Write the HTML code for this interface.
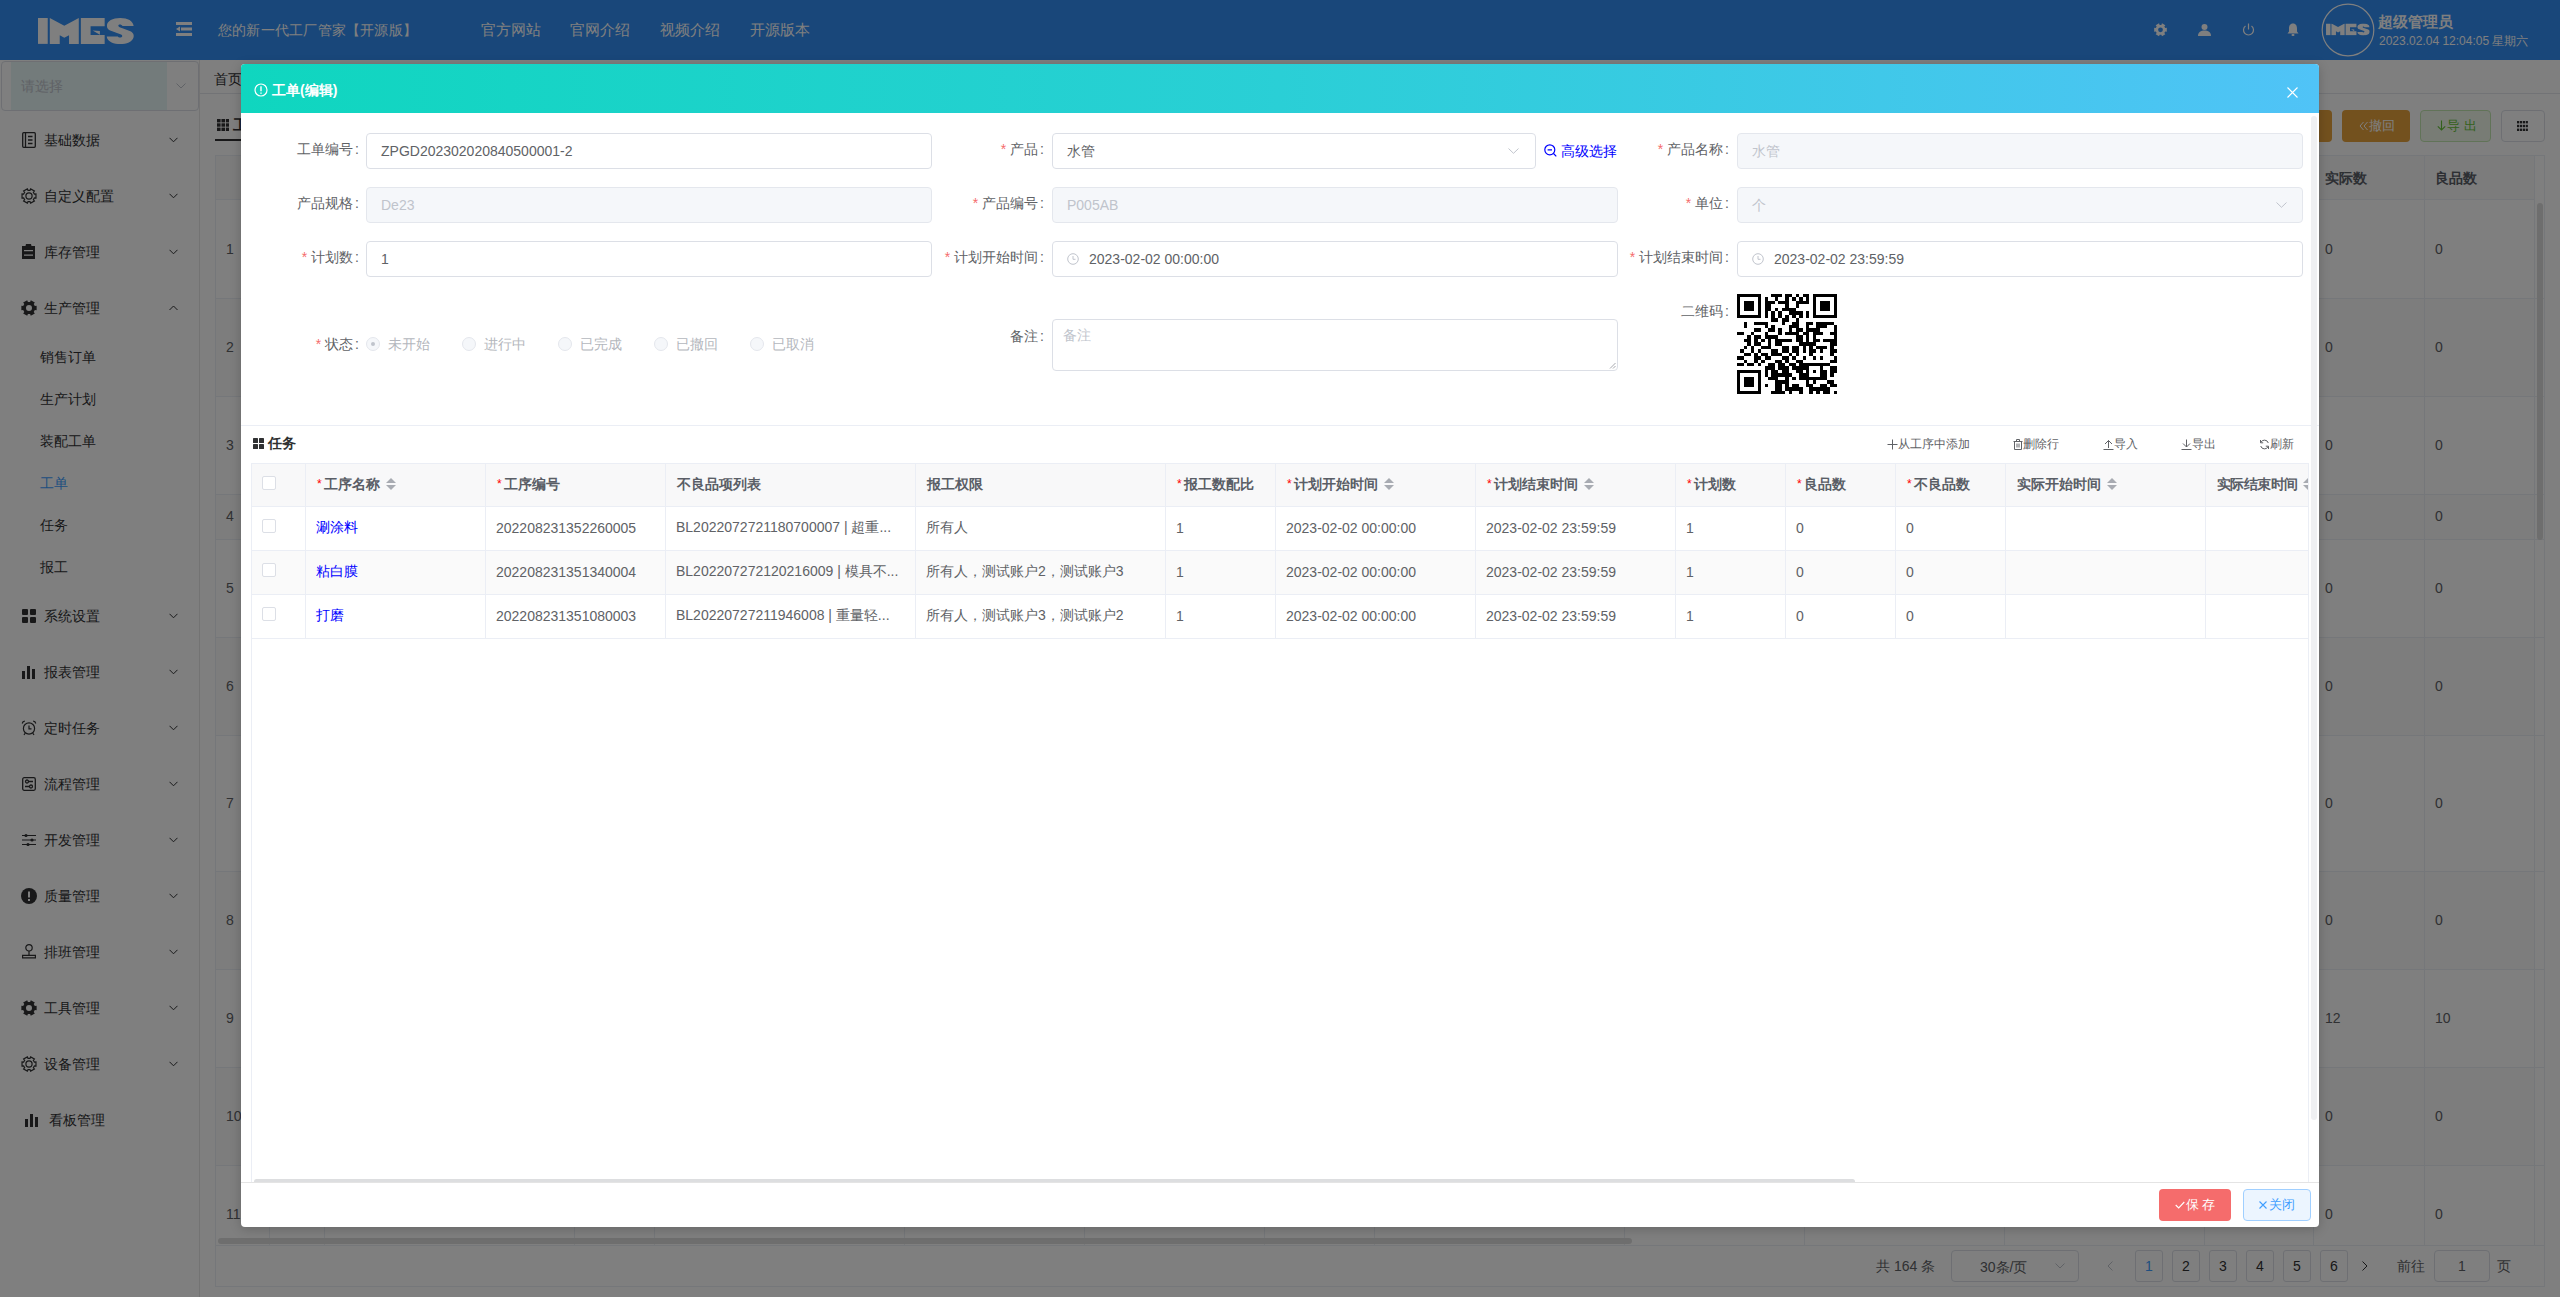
<!DOCTYPE html><html><head><meta charset="utf-8"><title>IMES</title><style>
*{box-sizing:border-box;margin:0;padding:0}
html,body{width:2560px;height:1297px;overflow:hidden;background:#fff;font-family:"Liberation Sans",sans-serif;font-size:14px;color:#606266}
.abs{position:absolute}
.hdr{position:absolute;left:0;top:0;width:2560px;height:60px;background:#328ef4;color:#fff}
.side{position:absolute;left:0;top:60px;width:200px;height:1237px;background:#fff;border-right:1px solid #e6e6e6}
.mi{position:absolute;left:0;width:199px;height:56px;line-height:56px;color:#303133;font-size:14px}
.mi .ic{position:absolute;left:22px;top:21px;width:14px;height:14px}
.mi .tx{position:absolute;left:44px;top:0}
.mi .ch{position:absolute;left:169px;top:25px;width:9px;height:6px}
.smi{position:absolute;left:40px;height:42px;line-height:42px;color:#303133;font-size:14px}
.overlay{position:absolute;left:0;top:0;width:2560px;height:1297px;background:rgba(0,0,0,.5)}
.modal{position:absolute;left:241px;top:64px;width:2078px;height:1163px;background:#fff;border-radius:4px;overflow:hidden;box-shadow:0 2px 12px rgba(0,0,0,.2)}
.mh{position:absolute;left:0;top:0;width:2078px;height:49px;background:linear-gradient(90deg,#0fd6bf 0%,#2acfd6 50%,#50c3f7 100%)}
.lbl{position:absolute;height:36px;line-height:36px;text-align:right;color:#606266;font-size:14px;white-space:nowrap}
.req{color:#f56c6c;margin-right:4px}
.inp{position:absolute;height:36px;border:1px solid #dcdfe6;border-radius:4px;background:#fff;line-height:34px;padding-left:14px;color:#606266;font-size:14px;white-space:nowrap}
.inp.dis{background:#f5f7fa;border-color:#e4e7ed;color:#c0c4cc}
.radio{position:absolute;top:337px;width:14px;height:14px;border:1px solid #e4e7ed;border-radius:50%;background:#f5f7fa}
.rtx{position:absolute;top:335px;line-height:18px;color:#b4b7bd;font-size:14px}
table.t{border-collapse:collapse;table-layout:fixed;position:absolute}
.t td,.t th{border:1px solid #ebeef5;text-align:left;white-space:nowrap;overflow:hidden;text-overflow:ellipsis;font-size:14px}
.t th{text-overflow:clip;background:#f8f8f9;color:#5a5e66;font-weight:bold;height:43px;padding-left:11px}
.t td{height:44px;padding-left:10px;padding-bottom:2px;color:#606266}
.star{color:#f00;margin-right:2px;font-weight:normal;font-size:12px;position:relative;top:-1px}
.cb{display:inline-block;width:14px;height:14px;border:1px solid #dcdfe6;border-radius:2px;background:#fff;vertical-align:middle;position:relative;top:-3px}
.lnk{color:#0000ff}
.sort{display:inline-block;width:10px;height:14px;vertical-align:middle;margin-left:6px;position:relative;top:-1px}
.sort:before{content:"";position:absolute;left:0;top:1px;border:5px solid transparent;border-top:0;border-bottom:5px solid #a8abb2}
.sort:after{content:"";position:absolute;left:0;top:8px;border:5px solid transparent;border-bottom:0;border-top:5px solid #a8abb2}
.bt{position:absolute;font-size:12px;color:#606266;white-space:nowrap}
.bg td,.bg th{border:1px solid #ebeef5;color:#606266;font-size:14px;padding-left:10px;text-align:left}
.pg{position:absolute;top:1250px;width:28px;height:32px;border:1px solid #dcdfe6;border-radius:3px;text-align:center;line-height:30px;color:#303133;font-size:14px;background:#fff}
</style></head><body>
<div class="hdr">
<svg class="abs" style="left:38.14px;top:18px" width="95.65" height="26.1" viewBox="100 145 2310 630"><g fill="#fff"><path d="M100 145H335V770H100Z"/>
<path d="M385 145L735 330L1085 145V770H850V560L735 620L625 560V770H385Z"/>
<path d="M1135 145H1710V345H1370V555H1710V770H1135Z"/>
<path d="M1420 445L1595 460V550Z"/>
<path d="M2410 340H2140C2120 300 2050 290 2040 330C2035 365 2090 375 2140 392L2300 450C2390 480 2412 530 2412 580C2412 700 2270 775 2085 775C1900 775 1770 700 1760 590H2030C2040 625 2125 625 2135 585C2140 550 2090 540 2040 522L1860 455C1790 425 1765 390 1765 330C1765 215 1905 145 2085 145C2270 145 2395 215 2410 340Z"/></g></svg>
<svg class="abs" style="left:176px;top:22px" width="16" height="14" viewBox="0 0 16 14"><g fill="#fff"><rect x="0" y="0" width="16" height="3"/><rect x="5" y="5.5" width="11" height="3"/><rect x="0" y="11" width="16" height="3"/><path d="M0 7 L4 4.5 L4 9.5 Z"/></g></svg>
<div class="abs" style="left:218px;top:21px;font-size:14px;line-height:18px;color:#fff;white-space:nowrap;letter-spacing:0.22px">您的新一代工厂管家【开源版】</div>
<div class="abs" style="left:481px;top:21px;font-size:14.5px;line-height:18px;color:#fff;white-space:nowrap">官方网站</div>
<div class="abs" style="left:570px;top:21px;font-size:14.5px;line-height:18px;color:#fff;white-space:nowrap">官网介绍</div>
<div class="abs" style="left:660px;top:21px;font-size:14.5px;line-height:18px;color:#fff;white-space:nowrap">视频介绍</div>
<div class="abs" style="left:750px;top:21px;font-size:14.5px;line-height:18px;color:#fff;white-space:nowrap">开源版本</div>
<svg class="abs" style="left:2153px;top:23px" width="15" height="14" viewBox="0 0 15 14"><path fill="#fff" fill-rule="evenodd" d="M12.21 5.11 L13.81 4.85 L13.81 8.75 L12.21 8.49 L11.32 10.03 L12.34 11.29 L8.96 13.24 L8.39 11.72 L6.61 11.72 L6.04 13.24 L2.66 11.29 L3.68 10.03 L2.79 8.49 L1.19 8.75 L1.19 4.85 L2.79 5.11 L3.68 3.57 L2.66 2.31 L6.04 0.36 L6.61 1.88 L8.39 1.88 L8.96 0.36 L12.34 2.31 L11.32 3.57 Z M9.90 6.80 A2.4 2.4 0 1 0 5.10 6.80 A2.4 2.4 0 1 0 9.90 6.80 Z"/></svg>
<svg class="abs" style="left:2198px;top:24px" width="13" height="12" viewBox="0 0 13 12"><g fill="#fff"><circle cx="6.5" cy="3" r="3"/><path d="M0 12 C0 8 3 6.5 6.5 6.5 C10 6.5 13 8 13 12 Z"/></g></svg>
<svg class="abs" style="left:2242px;top:23px" width="13" height="13" viewBox="0 0 13 13"><g fill="none" stroke="#fff" stroke-width="1.2"><path d="M3.5 3 A5 5 0 1 0 9.5 3"/><path d="M6.5 0.5 V6.5"/></g></svg>
<svg class="abs" style="left:2287px;top:23px" width="12" height="13" viewBox="0 0 12 13"><g fill="#fff"><path d="M6 0.5 C3 0.5 2 3 2 5.5 L2 8.5 L0.5 10.5 L11.5 10.5 L10 8.5 L10 5.5 C10 3 9 0.5 6 0.5 Z"/><rect x="4.5" y="11" width="3" height="2" rx="1"/></g></svg>
<svg class="abs" style="left:2321px;top:3px" width="54" height="54" viewBox="0 0 54 54"><circle cx="27" cy="27" r="25.8" fill="none" stroke="#fff" stroke-width="1.2"/>
<svg x="5" y="20.5" width="43.7" height="11.9" viewBox="100 145 2310 630"><g fill="#fff"><path d="M100 145H335V770H100Z"/>
<path d="M385 145L735 330L1085 145V770H850V560L735 620L625 560V770H385Z"/>
<path d="M1135 145H1710V345H1370V555H1710V770H1135Z"/>
<path d="M1420 445L1595 460V550Z"/>
<path d="M2410 340H2140C2120 300 2050 290 2040 330C2035 365 2090 375 2140 392L2300 450C2390 480 2412 530 2412 580C2412 700 2270 775 2085 775C1900 775 1770 700 1760 590H2030C2040 625 2125 625 2135 585C2140 550 2090 540 2040 522L1860 455C1790 425 1765 390 1765 330C1765 215 1905 145 2085 145C2270 145 2395 215 2410 340Z"/></g></svg></svg>
<div class="abs" style="left:2378px;top:13px;font-size:15px;line-height:18px;font-weight:bold;color:#fff;white-space:nowrap">超级管理员</div>
<div class="abs" style="left:2379px;top:34px;font-size:12px;line-height:15px;color:#fff;white-space:nowrap">2023.02.04 12:04:05 星期六</div>
</div>
<div class="side">
<div class="abs" style="left:1px;top:1px;width:198px;height:50px;border:1px solid #dcdfe6;border-radius:4px;background:#fff"></div>
<div class="abs" style="left:11px;top:2px;width:156px;height:48px;background:#e6f6f6"></div>
<div class="abs" style="left:21px;top:17px;font-size:14px;line-height:18px;color:#c0c4cc">请选择</div>
<svg class="abs" style="left:176px;top:23px" width="10" height="6" viewBox="0 0 10 6"><path d="M0.5 0.5 L5 5 L9.5 0.5" fill="none" stroke="#c0c4cc" stroke-width="1"/></svg>
<div class="mi" style="top:52px"><svg class="ic" viewBox="0 0 14 16" style="height:16px;top:20px"><g fill="none" stroke="#303133" stroke-width="1.3"><rect x="0.7" y="0.7" width="12.6" height="14.6" rx="1"/><path d="M3.5 1 V15 M6 4.5 H10.5 M6 8 H10.5 M6 11.5 H10.5"/></g></svg><span class="tx">基础数据</span><svg class="ch" viewBox="0 0 9 6"><path d="M0.5 0.8 L4.5 4.8 L8.5 0.8" fill="none" stroke="#303133" stroke-width="1"/></svg></div>
<div class="mi" style="top:108px"><svg class="ic" viewBox="0 0 16 16" style="width:16px;height:16px;left:21px;top:20px"><path fill="none" stroke="#303133" stroke-width="1.2" d="M13.36 6.07 L14.97 5.84 L14.97 10.16 L13.36 9.93 L12.35 11.68 L13.36 12.96 L9.62 15.12 L9.01 13.61 L6.99 13.61 L6.38 15.12 L2.64 12.96 L3.65 11.68 L2.64 9.93 L1.03 10.16 L1.03 5.84 L2.64 6.07 L3.65 4.32 L2.64 3.04 L6.38 0.88 L6.99 2.39 L9.01 2.39 L9.62 0.88 L13.36 3.04 L12.35 4.32 Z"/><circle cx="8" cy="8" r="3.1" fill="none" stroke="#303133" stroke-width="1.2"/></svg><span class="tx">自定义配置</span><svg class="ch" viewBox="0 0 9 6"><path d="M0.5 0.8 L4.5 4.8 L8.5 0.8" fill="none" stroke="#303133" stroke-width="1"/></svg></div>
<div class="mi" style="top:164px"><svg class="ic" viewBox="0 0 13 15" style="width:13px;height:15px;top:20px"><path fill="#303133" fill-rule="evenodd" d="M0 2 H3.5 L4 0 H9 L9.5 2 H13 V15 H0 Z M2 6 H11 V7.2 H2 Z M2 10.5 H11 V11.7 H2 Z"/></svg><span class="tx">库存管理</span><svg class="ch" viewBox="0 0 9 6"><path d="M0.5 0.8 L4.5 4.8 L8.5 0.8" fill="none" stroke="#303133" stroke-width="1"/></svg></div>
<div class="mi" style="top:220px"><svg class="ic" viewBox="0 0 16 16" style="width:16px;height:16px;left:21px;top:20px"><path fill="#303133" fill-rule="evenodd" d="M13.83 5.90 L15.64 5.64 L15.64 10.36 L13.83 10.10 L12.73 12.00 L13.87 13.44 L9.77 15.80 L9.10 14.10 L6.90 14.10 L6.23 15.80 L2.13 13.44 L3.27 12.00 L2.17 10.10 L0.36 10.36 L0.36 5.64 L2.17 5.90 L3.27 4.00 L2.13 2.56 L6.23 0.20 L6.90 1.90 L9.10 1.90 L9.77 0.20 L13.87 2.56 L12.73 4.00 Z M11.00 8.00 A3.0 3.0 0 1 0 5.00 8.00 A3.0 3.0 0 1 0 11.00 8.00 Z"/></svg><span class="tx">生产管理</span><svg class="ch" viewBox="0 0 9 6"><path d="M0.5 5 L4.5 1 L8.5 5" fill="none" stroke="#303133" stroke-width="1"/></svg></div>
<div class="smi" style="top:276px;color:#303133">销售订单</div>
<div class="smi" style="top:318px;color:#303133">生产计划</div>
<div class="smi" style="top:360px;color:#303133">装配工单</div>
<div class="smi" style="top:402px;color:#409eff">工单</div>
<div class="smi" style="top:444px;color:#303133">任务</div>
<div class="smi" style="top:486px;color:#303133">报工</div>
<div class="mi" style="top:528px"><svg class="ic" viewBox="0 0 14 14" style="top:21px"><g fill="#303133"><rect x="0" y="0" width="6" height="6" rx="1"/><rect x="8" y="0" width="6" height="6" rx="1"/><rect x="0" y="8" width="6" height="6" rx="1"/><rect x="8" y="8" width="6" height="6" rx="1"/></g></svg><span class="tx">系统设置</span><svg class="ch" viewBox="0 0 9 6"><path d="M0.5 0.8 L4.5 4.8 L8.5 0.8" fill="none" stroke="#303133" stroke-width="1"/></svg></div>
<div class="mi" style="top:584px"><svg class="ic" viewBox="0 0 14 14" style="top:21px"><g fill="#303133"><rect x="0" y="6" width="3" height="8"/><rect x="5" y="1" width="3" height="13"/><rect x="10" y="4" width="3" height="10"/></g></svg><span class="tx">报表管理</span><svg class="ch" viewBox="0 0 9 6"><path d="M0.5 0.8 L4.5 4.8 L8.5 0.8" fill="none" stroke="#303133" stroke-width="1"/></svg></div>
<div class="mi" style="top:640px"><svg class="ic" viewBox="0 0 16 16" style="width:16px;height:16px;left:21px;top:20px"><g fill="none" stroke="#303133" stroke-width="1.2"><circle cx="8" cy="8.5" r="5.6"/><path d="M8 5.5 V8.8 H10.5 M1.2 3.5 A3 3 0 0 1 3.8 1.2 M14.8 3.5 A3 3 0 0 0 12.2 1.2 M4.3 13 L3 15 M11.7 13 L13 15"/></g></svg><span class="tx">定时任务</span><svg class="ch" viewBox="0 0 9 6"><path d="M0.5 0.8 L4.5 4.8 L8.5 0.8" fill="none" stroke="#303133" stroke-width="1"/></svg></div>
<div class="mi" style="top:696px"><svg class="ic" viewBox="0 0 14 14" style="top:21px"><g fill="none" stroke="#303133" stroke-width="1.3"><rect x="0.7" y="0.7" width="12.6" height="12.6" rx="1.5"/><circle cx="5" cy="4.5" r="1.5"/><circle cx="9" cy="9.5" r="1.5"/><path d="M6.5 4.5 H11 M3 9.5 H7.5"/></g></svg><span class="tx">流程管理</span><svg class="ch" viewBox="0 0 9 6"><path d="M0.5 0.8 L4.5 4.8 L8.5 0.8" fill="none" stroke="#303133" stroke-width="1"/></svg></div>
<div class="mi" style="top:752px"><svg class="ic" viewBox="0 0 14 14" style="top:21px"><g fill="none" stroke="#303133" stroke-width="1.2"><path d="M0 2.5 H14 M0 7 H14 M0 11.5 H14"/></g><g fill="#303133"><circle cx="4" cy="2.5" r="1.6"/><circle cx="10" cy="7" r="1.6"/><circle cx="6" cy="11.5" r="1.6"/></g></svg><span class="tx">开发管理</span><svg class="ch" viewBox="0 0 9 6"><path d="M0.5 0.8 L4.5 4.8 L8.5 0.8" fill="none" stroke="#303133" stroke-width="1"/></svg></div>
<div class="mi" style="top:808px"><svg class="ic" viewBox="0 0 16 16" style="width:16px;height:16px;left:21px;top:20px"><circle cx="8" cy="8" r="8" fill="#303133"/><rect x="7" y="3.5" width="2" height="6" fill="#fff"/><rect x="7" y="11" width="2" height="2" fill="#fff"/></svg><span class="tx">质量管理</span><svg class="ch" viewBox="0 0 9 6"><path d="M0.5 0.8 L4.5 4.8 L8.5 0.8" fill="none" stroke="#303133" stroke-width="1"/></svg></div>
<div class="mi" style="top:864px"><svg class="ic" viewBox="0 0 14 15" style="height:15px;top:20px"><g fill="none" stroke="#303133" stroke-width="1.2"><circle cx="7" cy="3.8" r="3.2"/><path d="M7 7 V11.3 M0.6 11.3 H13.4 V13.8 H0.6 Z"/></g></svg><span class="tx">排班管理</span><svg class="ch" viewBox="0 0 9 6"><path d="M0.5 0.8 L4.5 4.8 L8.5 0.8" fill="none" stroke="#303133" stroke-width="1"/></svg></div>
<div class="mi" style="top:920px"><svg class="ic" viewBox="0 0 16 16" style="width:16px;height:16px;left:21px;top:20px"><path fill="#303133" fill-rule="evenodd" d="M13.83 5.90 L15.64 5.64 L15.64 10.36 L13.83 10.10 L12.73 12.00 L13.87 13.44 L9.77 15.80 L9.10 14.10 L6.90 14.10 L6.23 15.80 L2.13 13.44 L3.27 12.00 L2.17 10.10 L0.36 10.36 L0.36 5.64 L2.17 5.90 L3.27 4.00 L2.13 2.56 L6.23 0.20 L6.90 1.90 L9.10 1.90 L9.77 0.20 L13.87 2.56 L12.73 4.00 Z M11.00 8.00 A3.0 3.0 0 1 0 5.00 8.00 A3.0 3.0 0 1 0 11.00 8.00 Z"/></svg><span class="tx">工具管理</span><svg class="ch" viewBox="0 0 9 6"><path d="M0.5 0.8 L4.5 4.8 L8.5 0.8" fill="none" stroke="#303133" stroke-width="1"/></svg></div>
<div class="mi" style="top:976px"><svg class="ic" viewBox="0 0 16 16" style="width:16px;height:16px;left:21px;top:20px"><path fill="none" stroke="#303133" stroke-width="1.2" d="M13.36 6.07 L14.97 5.84 L14.97 10.16 L13.36 9.93 L12.35 11.68 L13.36 12.96 L9.62 15.12 L9.01 13.61 L6.99 13.61 L6.38 15.12 L2.64 12.96 L3.65 11.68 L2.64 9.93 L1.03 10.16 L1.03 5.84 L2.64 6.07 L3.65 4.32 L2.64 3.04 L6.38 0.88 L6.99 2.39 L9.01 2.39 L9.62 0.88 L13.36 3.04 L12.35 4.32 Z"/><circle cx="8" cy="8" r="3.1" fill="none" stroke="#303133" stroke-width="1.2"/></svg><span class="tx">设备管理</span><svg class="ch" viewBox="0 0 9 6"><path d="M0.5 0.8 L4.5 4.8 L8.5 0.8" fill="none" stroke="#303133" stroke-width="1"/></svg></div>
<div class="mi" style="top:1032px"><svg class="ic" viewBox="0 0 14 14" style="top:21px;left:25px"><g fill="#303133"><rect x="0" y="6" width="3" height="8"/><rect x="5" y="1" width="3" height="13"/><rect x="10" y="4" width="3" height="10"/></g></svg><span class="tx" style="left:49px">看板管理</span></div>
</div>
<div class="abs" style="left:200px;top:60px;width:2360px;height:34px;background:#fff;border-bottom:1px solid #e4e7ed"></div>
<div class="abs" style="left:214px;top:70px;font-size:14px;line-height:18px;color:#303133">首页</div>
<svg class="abs" style="left:216.5px;top:119px" width="12.5" height="12" viewBox="0 0 12.5 12"><g fill="#303133"><rect x="0" y="0" width="3.6" height="3.4"/><rect x="4.45" y="0" width="3.6" height="3.4"/><rect x="8.9" y="0" width="3.6" height="3.4"/><rect x="0" y="4.3" width="3.6" height="3.4"/><rect x="4.45" y="4.3" width="3.6" height="3.4"/><rect x="8.9" y="4.3" width="3.6" height="3.4"/><rect x="0" y="8.6" width="3.6" height="3.4"/><rect x="4.45" y="8.6" width="3.6" height="3.4"/><rect x="8.9" y="8.6" width="3.6" height="3.4"/></g></svg>
<div class="abs" style="left:233px;top:116px;font-size:15px;line-height:18px;color:#303133;font-weight:bold">工单</div>
<div class="abs" style="left:215px;top:139px;width:60px;height:2px;background:#303133"></div>
<div class="abs" style="left:2270px;top:110px;width:62px;height:32px;background:#e6a23c;border-radius:4px"></div>
<div class="abs" style="left:2342px;top:110px;width:68px;height:32px;background:#e6a23c;border-radius:4px"></div>
<svg class="abs" style="left:2359px;top:121px" width="10" height="10" viewBox="0 0 10 10"><path d="M4.5 1 L1 5 L4.5 9 M8.5 1 L5 5 L8.5 9" fill="none" stroke="#fff" stroke-width="1"/></svg>
<div class="abs" style="left:2369px;top:117px;font-size:13px;line-height:17px;color:#fff;white-space:nowrap">撤回</div>
<div class="abs" style="left:2420px;top:110px;width:71px;height:32px;background:#f0f9eb;border:1px solid #c2e7b0;border-radius:4px"></div>
<svg class="abs" style="left:2437px;top:120px" width="9" height="11" viewBox="0 0 9 11"><path d="M4.5 0.5 V10 M0.8 6.3 L4.5 10 L8.2 6.3" fill="none" stroke="#67c23a" stroke-width="1.1"/></svg>
<div class="abs" style="left:2447px;top:117px;font-size:13px;line-height:17px;color:#67c23a;white-space:nowrap;letter-spacing:0px">导 出</div>
<div class="abs" style="left:2501px;top:110px;width:44px;height:32px;background:#fff;border:1px solid #dcdfe6;border-radius:4px"></div>
<svg class="abs" style="left:2517px;top:121px" width="11" height="10" viewBox="0 0 11 10"><g fill="#303133"><rect x="0" y="0" width="2.2" height="2.4"/><rect x="2.9" y="0" width="2.2" height="2.4"/><rect x="5.8" y="0" width="2.2" height="2.4"/><rect x="8.7" y="0" width="2.2" height="2.4"/><rect x="0" y="3.8" width="2.2" height="2.4"/><rect x="2.9" y="3.8" width="2.2" height="2.4"/><rect x="5.8" y="3.8" width="2.2" height="2.4"/><rect x="8.7" y="3.8" width="2.2" height="2.4"/><rect x="0" y="7.6" width="2.2" height="2.4"/><rect x="2.9" y="7.6" width="2.2" height="2.4"/><rect x="5.8" y="7.6" width="2.2" height="2.4"/><rect x="8.7" y="7.6" width="2.2" height="2.4"/></g></svg>
<div class="abs" style="left:215px;top:155px;width:2330px;height:1132px;border:1px solid #ebeef5;background:#fff"></div>
<div class="abs" style="left:216px;top:156px;width:2318px;height:44px;background:#f8f8f9;border-bottom:1px solid #ebeef5"></div>
<div class="abs" style="left:2325px;top:169px;font-size:14px;line-height:18px;color:#5a5e66;font-weight:bold">实际数</div>
<div class="abs" style="left:2435px;top:169px;font-size:14px;line-height:18px;color:#5a5e66;font-weight:bold">良品数</div>
<div class="abs" style="left:216px;top:298px;width:2328px;height:1px;background:#ebeef5"></div>
<div class="abs" style="left:226px;top:240px;font-size:14px;line-height:18px;color:#606266">1</div>
<div class="abs" style="left:2325px;top:240px;font-size:14px;line-height:18px;color:#606266">0</div>
<div class="abs" style="left:2435px;top:240px;font-size:14px;line-height:18px;color:#606266">0</div>
<div class="abs" style="left:216px;top:299px;width:2318px;height:97px;background:#fafafa"></div>
<div class="abs" style="left:216px;top:396px;width:2328px;height:1px;background:#ebeef5"></div>
<div class="abs" style="left:226px;top:338px;font-size:14px;line-height:18px;color:#606266">2</div>
<div class="abs" style="left:2325px;top:338px;font-size:14px;line-height:18px;color:#606266">0</div>
<div class="abs" style="left:2435px;top:338px;font-size:14px;line-height:18px;color:#606266">0</div>
<div class="abs" style="left:216px;top:494px;width:2328px;height:1px;background:#ebeef5"></div>
<div class="abs" style="left:226px;top:436px;font-size:14px;line-height:18px;color:#606266">3</div>
<div class="abs" style="left:2325px;top:436px;font-size:14px;line-height:18px;color:#606266">0</div>
<div class="abs" style="left:2435px;top:436px;font-size:14px;line-height:18px;color:#606266">0</div>
<div class="abs" style="left:216px;top:495px;width:2318px;height:44px;background:#fafafa"></div>
<div class="abs" style="left:216px;top:539px;width:2328px;height:1px;background:#ebeef5"></div>
<div class="abs" style="left:226px;top:507px;font-size:14px;line-height:18px;color:#606266">4</div>
<div class="abs" style="left:2325px;top:507px;font-size:14px;line-height:18px;color:#606266">0</div>
<div class="abs" style="left:2435px;top:507px;font-size:14px;line-height:18px;color:#606266">0</div>
<div class="abs" style="left:216px;top:637px;width:2328px;height:1px;background:#ebeef5"></div>
<div class="abs" style="left:226px;top:579px;font-size:14px;line-height:18px;color:#606266">5</div>
<div class="abs" style="left:2325px;top:579px;font-size:14px;line-height:18px;color:#606266">0</div>
<div class="abs" style="left:2435px;top:579px;font-size:14px;line-height:18px;color:#606266">0</div>
<div class="abs" style="left:216px;top:638px;width:2318px;height:97px;background:#fafafa"></div>
<div class="abs" style="left:216px;top:735px;width:2328px;height:1px;background:#ebeef5"></div>
<div class="abs" style="left:226px;top:677px;font-size:14px;line-height:18px;color:#606266">6</div>
<div class="abs" style="left:2325px;top:677px;font-size:14px;line-height:18px;color:#606266">0</div>
<div class="abs" style="left:2435px;top:677px;font-size:14px;line-height:18px;color:#606266">0</div>
<div class="abs" style="left:216px;top:871px;width:2328px;height:1px;background:#ebeef5"></div>
<div class="abs" style="left:226px;top:794px;font-size:14px;line-height:18px;color:#606266">7</div>
<div class="abs" style="left:2325px;top:794px;font-size:14px;line-height:18px;color:#606266">0</div>
<div class="abs" style="left:2435px;top:794px;font-size:14px;line-height:18px;color:#606266">0</div>
<div class="abs" style="left:216px;top:872px;width:2318px;height:97px;background:#fafafa"></div>
<div class="abs" style="left:216px;top:969px;width:2328px;height:1px;background:#ebeef5"></div>
<div class="abs" style="left:226px;top:911px;font-size:14px;line-height:18px;color:#606266">8</div>
<div class="abs" style="left:2325px;top:911px;font-size:14px;line-height:18px;color:#606266">0</div>
<div class="abs" style="left:2435px;top:911px;font-size:14px;line-height:18px;color:#606266">0</div>
<div class="abs" style="left:216px;top:1067px;width:2328px;height:1px;background:#ebeef5"></div>
<div class="abs" style="left:226px;top:1009px;font-size:14px;line-height:18px;color:#606266">9</div>
<div class="abs" style="left:2325px;top:1009px;font-size:14px;line-height:18px;color:#606266">12</div>
<div class="abs" style="left:2435px;top:1009px;font-size:14px;line-height:18px;color:#606266">10</div>
<div class="abs" style="left:216px;top:1068px;width:2318px;height:97px;background:#fafafa"></div>
<div class="abs" style="left:216px;top:1165px;width:2328px;height:1px;background:#ebeef5"></div>
<div class="abs" style="left:226px;top:1107px;font-size:14px;line-height:18px;color:#606266">10</div>
<div class="abs" style="left:2325px;top:1107px;font-size:14px;line-height:18px;color:#606266">0</div>
<div class="abs" style="left:2435px;top:1107px;font-size:14px;line-height:18px;color:#606266">0</div>
<div class="abs" style="left:216px;top:1245px;width:2328px;height:1px;background:#ebeef5"></div>
<div class="abs" style="left:226px;top:1205px;font-size:14px;line-height:18px;color:#606266">11</div>
<div class="abs" style="left:2325px;top:1205px;font-size:14px;line-height:18px;color:#606266">0</div>
<div class="abs" style="left:2435px;top:1205px;font-size:14px;line-height:18px;color:#606266">0</div>
<div class="abs" style="left:269px;top:156px;width:1px;height:1089px;background:#ebeef5"></div>
<div class="abs" style="left:324px;top:156px;width:1px;height:1089px;background:#ebeef5"></div>
<div class="abs" style="left:574px;top:156px;width:1px;height:1089px;background:#ebeef5"></div>
<div class="abs" style="left:654px;top:156px;width:1px;height:1089px;background:#ebeef5"></div>
<div class="abs" style="left:904px;top:156px;width:1px;height:1089px;background:#ebeef5"></div>
<div class="abs" style="left:1084px;top:156px;width:1px;height:1089px;background:#ebeef5"></div>
<div class="abs" style="left:1264px;top:156px;width:1px;height:1089px;background:#ebeef5"></div>
<div class="abs" style="left:1374px;top:156px;width:1px;height:1089px;background:#ebeef5"></div>
<div class="abs" style="left:1624px;top:156px;width:1px;height:1089px;background:#ebeef5"></div>
<div class="abs" style="left:1804px;top:156px;width:1px;height:1089px;background:#ebeef5"></div>
<div class="abs" style="left:2004px;top:156px;width:1px;height:1089px;background:#ebeef5"></div>
<div class="abs" style="left:2204px;top:156px;width:1px;height:1089px;background:#ebeef5"></div>
<div class="abs" style="left:2313px;top:156px;width:1px;height:1089px;background:#ebeef5"></div>
<div class="abs" style="left:2424px;top:156px;width:1px;height:1089px;background:#ebeef5"></div>
<div class="abs" style="left:2534px;top:156px;width:1px;height:1089px;background:#ebeef5"></div>
<div class="abs" style="left:2537px;top:203px;width:6px;height:337px;border-radius:3px;background:#ddd"></div>
<div class="abs" style="left:218px;top:1238px;width:1414px;height:6px;border-radius:3px;background:#ddd"></div>
<div class="abs" style="left:1876px;top:1257px;font-size:14px;line-height:18px;color:#606266;white-space:nowrap">共 164 条</div>
<div class="abs" style="left:1951px;top:1250px;width:128px;height:32px;border:1px solid #dcdfe6;border-radius:4px;background:#fff"></div>
<div class="abs" style="left:1980px;top:1258px;font-size:14px;line-height:18px;color:#606266;white-space:nowrap">30条/页</div>
<svg class="abs" style="left:2055px;top:1263px" width="10" height="6" viewBox="0 0 10 6"><path d="M0.5 0.5 L5 5 L9.5 0.5" fill="none" stroke="#c0c4cc" stroke-width="1"/></svg>
<svg class="abs" style="left:2107px;top:1261px" width="6" height="10" viewBox="0 0 6 10"><path d="M5.5 0.5 L1 5 L5.5 9.5" fill="none" stroke="#c0c4cc" stroke-width="1"/></svg>
<div class="pg" style="left:2135px;color:#409eff">1</div>
<div class="pg" style="left:2172px;color:#303133">2</div>
<div class="pg" style="left:2209px;color:#303133">3</div>
<div class="pg" style="left:2246px;color:#303133">4</div>
<div class="pg" style="left:2283px;color:#303133">5</div>
<div class="pg" style="left:2320px;color:#303133">6</div>
<svg class="abs" style="left:2362px;top:1261px" width="6" height="10" viewBox="0 0 6 10"><path d="M0.5 0.5 L5 5 L0.5 9.5" fill="none" stroke="#303133" stroke-width="1"/></svg>
<div class="abs" style="left:2397px;top:1257px;font-size:14px;line-height:18px;color:#606266">前往</div>
<div class="abs" style="left:2434px;top:1250px;width:56px;height:32px;border:1px solid #dcdfe6;border-radius:4px;background:#fff;text-align:center;line-height:30px;color:#606266">1</div>
<div class="abs" style="left:2497px;top:1257px;font-size:14px;line-height:18px;color:#606266">页</div>
<div class="overlay"></div>
<div class="modal">
<div class="mh"></div>
<svg class="abs" style="left:13px;top:19px" width="14" height="14" viewBox="0 0 14 14"><circle cx="7" cy="7" r="6" fill="none" stroke="#fff" stroke-width="1.2"/><rect x="6.3" y="3.3" width="1.4" height="5" fill="#fff"/><rect x="6.3" y="9.5" width="1.4" height="1.3" fill="#fff"/></svg>
<div class="abs" style="left:31px;top:17px;font-size:14px;line-height:18px;font-weight:bold;color:#fff;white-space:nowrap">工单(编辑)</div>
<svg class="abs" style="left:2046px;top:23px" width="11" height="11" viewBox="0 0 11 11"><path d="M0.5 0.5 L10.5 10.5 M10.5 0.5 L0.5 10.5" stroke="#fff" stroke-width="1.1"/></svg>
<div class="lbl" style="right:1960px;top:67px;height:36px;line-height:36px">工单编号<span style="margin-left:2px">:</span></div>
<div class="inp" style="left:125px;top:69px;width:566px">ZPGD202302020840500001-2</div>
<div class="lbl" style="right:1275px;top:67px;height:36px;line-height:36px"><span class="req">*</span>产品<span style="margin-left:2px">:</span></div>
<div class="inp" style="left:811px;top:69px;width:484px">水管<svg style="position:absolute;left:455px;top:14px" width="11" height="6" viewBox="0 0 11 6"><path d="M0.5 0.5 L5.5 5.3 L10.5 0.5" fill="none" stroke="#c0c4cc" stroke-width="1"/></svg></div>
<svg class="abs" style="left:1303px;top:80px" width="13" height="13" viewBox="0 0 13 13"><circle cx="5.8" cy="5.8" r="5" fill="none" stroke="#0000ff" stroke-width="1.2"/><path d="M3.6 5.8 H8 M9.5 9.5 L12.3 12.3" stroke="#0000ff" stroke-width="1.2"/></svg>
<div class="abs" style="left:1320px;top:78px;font-size:14px;line-height:18px;color:#0000ff;white-space:nowrap">高级选择</div>
<div class="lbl" style="right:590px;top:67px;height:36px;line-height:36px"><span class="req">*</span>产品名称<span style="margin-left:2px">:</span></div>
<div class="inp dis" style="left:1496px;top:69px;width:566px">水管</div>
<div class="lbl" style="right:1960px;top:121px;height:36px;line-height:36px">产品规格<span style="margin-left:2px">:</span></div>
<div class="inp dis" style="left:125px;top:123px;width:566px">De23</div>
<div class="lbl" style="right:1275px;top:121px;height:36px;line-height:36px"><span class="req">*</span>产品编号<span style="margin-left:2px">:</span></div>
<div class="inp dis" style="left:811px;top:123px;width:566px">P005AB</div>
<div class="lbl" style="right:590px;top:121px;height:36px;line-height:36px"><span class="req">*</span>单位<span style="margin-left:2px">:</span></div>
<div class="inp dis" style="left:1496px;top:123px;width:566px">个<svg style="position:absolute;left:538px;top:14px" width="11" height="6" viewBox="0 0 11 6"><path d="M0.5 0.5 L5.5 5.3 L10.5 0.5" fill="none" stroke="#c0c4cc" stroke-width="1"/></svg></div>
<div class="lbl" style="right:1960px;top:175px;height:36px;line-height:36px"><span class="req">*</span>计划数<span style="margin-left:2px">:</span></div>
<div class="inp" style="left:125px;top:177px;width:566px">1</div>
<div class="lbl" style="right:1275px;top:175px;height:36px;line-height:36px"><span class="req">*</span>计划开始时间<span style="margin-left:2px">:</span></div>
<div class="inp" style="left:811px;top:177px;width:566px;padding-left:36px"><svg style="position:absolute;left:14px;top:11px" width="12" height="12" viewBox="0 0 12 12"><circle cx="6" cy="6" r="5.3" fill="none" stroke="#c0c4cc" stroke-width="1"/><path d="M6 3 V6.3 H8.5" fill="none" stroke="#c0c4cc" stroke-width="1"/></svg>2023-02-02 00:00:00</div>
<div class="lbl" style="right:590px;top:175px;height:36px;line-height:36px"><span class="req">*</span>计划结束时间<span style="margin-left:2px">:</span></div>
<div class="inp" style="left:1496px;top:177px;width:566px;padding-left:36px"><svg style="position:absolute;left:14px;top:11px" width="12" height="12" viewBox="0 0 12 12"><circle cx="6" cy="6" r="5.3" fill="none" stroke="#c0c4cc" stroke-width="1"/><path d="M6 3 V6.3 H8.5" fill="none" stroke="#c0c4cc" stroke-width="1"/></svg>2023-02-02 23:59:59</div>
<div class="lbl" style="right:1960px;top:262px;height:36px;line-height:36px"><span class="req">*</span>状态<span style="margin-left:2px">:</span></div>
<div class="radio" style="left:125px;top:273px"><div style="position:absolute;left:4px;top:4px;width:4px;height:4px;border-radius:50%;background:#c0c4cc"></div></div>
<div class="rtx" style="left:147px;top:271px">未开始</div>
<div class="radio" style="left:221px;top:273px"></div>
<div class="rtx" style="left:243px;top:271px">进行中</div>
<div class="radio" style="left:317px;top:273px"></div>
<div class="rtx" style="left:339px;top:271px">已完成</div>
<div class="radio" style="left:413px;top:273px"></div>
<div class="rtx" style="left:435px;top:271px">已撤回</div>
<div class="radio" style="left:509px;top:273px"></div>
<div class="rtx" style="left:531px;top:271px">已取消</div>
<div class="lbl" style="right:1275px;top:254px;height:36px;line-height:36px">备注<span style="margin-left:2px">:</span></div>
<div class="inp" style="left:811px;top:255px;width:566px;height:52px;line-height:18px;padding-top:6px;padding-left:10px;color:#c0c4cc">备注<svg style="position:absolute;right:1px;bottom:1px" width="7" height="7" viewBox="0 0 7 7"><path d="M1 6.5 L6.5 1 M4 6.5 L6.5 4" stroke="#909399" stroke-width="0.8"/></svg></div>
<div class="lbl" style="right:590px;top:229px;height:36px;line-height:36px">二维码<span style="margin-left:2px">:</span></div>
<svg class="abs" style="left:1495.5px;top:230.3px" width="100" height="100" viewBox="0 0 29 29" shape-rendering="crispEdges"><path d="M0 0h7v1h-7zM10 0h3v1h-3zM14 0h2v1h-2zM17 0h1v1h-1zM19 0h2v1h-2zM22 0h7v1h-7zM0 1h1v1h-1zM6 1h1v1h-1zM8 1h1v1h-1zM11 1h1v1h-1zM14 1h1v1h-1zM16 1h1v1h-1zM18 1h1v1h-1zM20 1h1v1h-1zM22 1h1v1h-1zM28 1h1v1h-1zM0 2h1v1h-1zM2 2h3v1h-3zM6 2h1v1h-1zM8 2h3v1h-3zM12 2h3v1h-3zM17 2h4v1h-4zM22 2h1v1h-1zM24 2h3v1h-3zM28 2h1v1h-1zM0 3h1v1h-1zM2 3h3v1h-3zM6 3h1v1h-1zM8 3h2v1h-2zM14 3h1v1h-1zM17 3h1v1h-1zM22 3h1v1h-1zM24 3h3v1h-3zM28 3h1v1h-1zM0 4h1v1h-1zM2 4h3v1h-3zM6 4h1v1h-1zM8 4h2v1h-2zM11 4h1v1h-1zM13 4h4v1h-4zM22 4h1v1h-1zM24 4h3v1h-3zM28 4h1v1h-1zM0 5h1v1h-1zM6 5h1v1h-1zM8 5h1v1h-1zM10 5h1v1h-1zM12 5h1v1h-1zM15 5h4v1h-4zM20 5h1v1h-1zM22 5h1v1h-1zM28 5h1v1h-1zM0 6h7v1h-7zM8 6h1v1h-1zM10 6h1v1h-1zM12 6h1v1h-1zM14 6h1v1h-1zM16 6h1v1h-1zM18 6h1v1h-1zM20 6h1v1h-1zM22 6h7v1h-7zM10 7h2v1h-2zM13 7h2v1h-2zM17 7h1v1h-1zM2 8h1v1h-1zM5 8h4v1h-4zM13 8h1v1h-1zM16 8h2v1h-2zM20 8h2v1h-2zM23 8h5v1h-5zM2 9h1v1h-1zM8 9h1v1h-1zM10 9h1v1h-1zM15 9h3v1h-3zM20 9h1v1h-1zM23 9h3v1h-3zM28 9h1v1h-1zM5 10h2v1h-2zM9 10h2v1h-2zM12 10h1v1h-1zM15 10h1v1h-1zM17 10h2v1h-2zM20 10h4v1h-4zM28 10h1v1h-1zM0 11h2v1h-2zM4 11h1v1h-1zM8 11h1v1h-1zM12 11h1v1h-1zM14 11h4v1h-4zM19 11h2v1h-2zM22 11h3v1h-3zM27 11h2v1h-2zM3 12h1v1h-1zM5 12h2v1h-2zM8 12h4v1h-4zM17 12h2v1h-2zM20 12h1v1h-1zM22 12h1v1h-1zM28 12h1v1h-1zM2 13h2v1h-2zM5 13h1v1h-1zM7 13h1v1h-1zM9 13h1v1h-1zM11 13h5v1h-5zM17 13h2v1h-2zM20 13h1v1h-1zM22 13h2v1h-2zM25 13h4v1h-4zM3 14h1v1h-1zM5 14h2v1h-2zM9 14h1v1h-1zM11 14h2v1h-2zM18 14h5v1h-5zM27 14h2v1h-2zM2 15h1v1h-1zM4 15h1v1h-1zM7 15h3v1h-3zM13 15h2v1h-2zM16 15h2v1h-2zM19 15h1v1h-1zM21 15h1v1h-1zM23 15h3v1h-3zM27 15h1v1h-1zM1 16h1v1h-1zM4 16h1v1h-1zM6 16h1v1h-1zM10 16h2v1h-2zM13 16h2v1h-2zM16 16h2v1h-2zM19 16h1v1h-1zM21 16h2v1h-2zM24 16h1v1h-1zM27 16h2v1h-2zM2 17h2v1h-2zM5 17h1v1h-1zM7 17h2v1h-2zM10 17h3v1h-3zM15 17h1v1h-1zM17 17h1v1h-1zM21 17h1v1h-1zM27 17h1v1h-1zM0 18h2v1h-2zM5 18h2v1h-2zM8 18h2v1h-2zM13 18h2v1h-2zM16 18h1v1h-1zM19 18h1v1h-1zM22 18h1v1h-1zM24 18h1v1h-1zM28 18h1v1h-1zM2 19h1v1h-1zM5 19h1v1h-1zM7 19h1v1h-1zM11 19h2v1h-2zM14 19h1v1h-1zM17 19h2v1h-2zM27 19h2v1h-2zM0 20h2v1h-2zM3 20h2v1h-2zM6 20h1v1h-1zM9 20h2v1h-2zM12 20h2v1h-2zM15 20h2v1h-2zM18 20h9v1h-9zM8 21h3v1h-3zM12 21h3v1h-3zM16 21h5v1h-5zM24 21h1v1h-1zM27 21h2v1h-2zM0 22h7v1h-7zM8 22h1v1h-1zM10 22h2v1h-2zM13 22h2v1h-2zM17 22h2v1h-2zM20 22h1v1h-1zM22 22h1v1h-1zM24 22h2v1h-2zM27 22h2v1h-2zM0 23h1v1h-1zM6 23h1v1h-1zM8 23h1v1h-1zM10 23h6v1h-6zM18 23h3v1h-3zM24 23h2v1h-2zM27 23h1v1h-1zM0 24h1v1h-1zM2 24h3v1h-3zM6 24h1v1h-1zM9 24h3v1h-3zM14 24h1v1h-1zM16 24h1v1h-1zM18 24h8v1h-8zM0 25h1v1h-1zM2 25h3v1h-3zM6 25h1v1h-1zM11 25h4v1h-4zM20 25h1v1h-1zM22 25h1v1h-1zM26 25h2v1h-2zM0 26h1v1h-1zM2 26h3v1h-3zM6 26h1v1h-1zM8 26h1v1h-1zM11 26h2v1h-2zM14 26h1v1h-1zM16 26h2v1h-2zM20 26h2v1h-2zM24 26h2v1h-2zM27 26h2v1h-2zM0 27h1v1h-1zM6 27h1v1h-1zM11 27h2v1h-2zM14 27h5v1h-5zM21 27h6v1h-6zM0 28h7v1h-7zM10 28h4v1h-4zM15 28h1v1h-1zM18 28h1v1h-1zM21 28h1v1h-1zM23 28h1v1h-1zM25 28h2v1h-2zM28 28h1v1h-1z" fill="#000"/></svg>
<div class="abs" style="left:0;top:361px;width:2078px;height:1px;background:#ebeef5"></div>
<svg class="abs" style="left:12px;top:374px" width="11" height="11" viewBox="0 0 11 11"><g fill="#303133"><rect x="0" y="0" width="5" height="5" rx="0.6"/><rect x="6" y="0" width="5" height="5" rx="0.6"/><rect x="0" y="6" width="5" height="5" rx="0.6"/><rect x="6" y="6" width="5" height="5" rx="0.6"/></g></svg>
<div class="abs" style="left:27px;top:370px;font-size:14px;line-height:18px;font-weight:bold;color:#303133">任务</div>
<div class="bt" style="left:1646px;top:373px;line-height:15px;padding-left:11px"><svg style="position:absolute;left:0;top:2px" width="11" height="11" viewBox="0 0 11 11"><path d="M5.5 0.5V10.5M0.5 5.5H10.5" stroke="#606266" stroke-width="1"/></svg>从工序中添加</div>
<div class="bt" style="left:1772px;top:373px;line-height:15px;padding-left:10px"><svg style="position:absolute;left:0;top:2px" width="10" height="11" viewBox="0 0 10 11"><g fill="none" stroke="#606266" stroke-width="1"><path d="M0.5 2.5H9.5M3.5 2.5V0.5H6.5V2.5M1.5 2.5V10.5H8.5V2.5M4 4.5V8.5M6 4.5V8.5"/></g></svg>删除行</div>
<div class="bt" style="left:1862px;top:373px;line-height:15px;padding-left:11px"><svg style="position:absolute;left:0;top:2px" width="11" height="11" viewBox="0 0 11 11"><g fill="none" stroke="#606266" stroke-width="1"><path d="M5.5 9V1.5M2 5L5.5 1.5L9 5M0.5 10.5H10.5"/></g></svg>导入</div>
<div class="bt" style="left:1940px;top:373px;line-height:15px;padding-left:11px"><svg style="position:absolute;left:0;top:2px" width="11" height="11" viewBox="0 0 11 11"><g fill="none" stroke="#606266" stroke-width="1"><path d="M5.5 0.5V8M2 4.5L5.5 8L9 4.5M0.5 10.5H10.5"/></g></svg>导出</div>
<div class="bt" style="left:2018px;top:373px;line-height:15px;padding-left:11px"><svg style="position:absolute;left:0;top:2px" width="11" height="11" viewBox="0 0 11 11"><g fill="none" stroke="#606266" stroke-width="1"><path d="M9.3 4A4 4 0 0 0 1.8 3.5M1.7 7A4 4 0 0 0 9.2 7.5"/><path d="M1.5 1V3.8H4.2M9.5 10V7.2H6.8"/></g></svg>刷新</div>
<div class="abs" style="left:10px;top:399px;width:2058px;height:720px;overflow:hidden;border-left:1px solid #ebeef5;border-right:1px solid #ebeef5">
<table class="t" style="left:-1px;top:0;width:2154px">
<colgroup><col style="width:54px"><col style="width:180px"><col style="width:180px"><col style="width:250px"><col style="width:250px"><col style="width:110px"><col style="width:200px"><col style="width:200px"><col style="width:110px"><col style="width:110px"><col style="width:110px"><col style="width:200px"><col style="width:200px"></colgroup>
<tr>
<th style="padding-left:10px"><span class="cb"></span></th>
<th><span class="star">*</span>工序名称<span class="sort"></span></th>
<th><span class="star">*</span>工序编号</th>
<th>不良品项列表</th>
<th>报工权限</th>
<th><span class="star">*</span>报工数配比</th>
<th><span class="star">*</span>计划开始时间<span class="sort"></span></th>
<th><span class="star">*</span>计划结束时间<span class="sort"></span></th>
<th><span class="star">*</span>计划数</th>
<th><span class="star">*</span>良品数</th>
<th><span class="star">*</span>不良品数</th>
<th>实际开始时间<span class="sort"></span></th>
<th style="letter-spacing:-0.6px">实际结束时间<span class="sort"></span></th>
</tr>
<tr style="background:#fff">
<td style="padding-left:10px"><span class="cb"></span></td>
<td><span class="lnk">涮涂料</span></td>
<td>202208231352260005</td>
<td>BL2022072721180700007 | 超重...</td>
<td>所有人</td>
<td>1</td>
<td>2023-02-02 00:00:00</td>
<td>2023-02-02 23:59:59</td>
<td>1</td>
<td>0</td>
<td>0</td>
<td></td>
<td></td>
</tr>
<tr style="background:#fafafa">
<td style="padding-left:10px"><span class="cb"></span></td>
<td><span class="lnk">粘白膜</span></td>
<td>202208231351340004</td>
<td>BL202207272120216009 | 模具不...</td>
<td>所有人，测试账户2，测试账户3</td>
<td>1</td>
<td>2023-02-02 00:00:00</td>
<td>2023-02-02 23:59:59</td>
<td>1</td>
<td>0</td>
<td>0</td>
<td></td>
<td></td>
</tr>
<tr style="background:#fff">
<td style="padding-left:10px"><span class="cb"></span></td>
<td><span class="lnk">打磨</span></td>
<td>202208231351080003</td>
<td>BL20220727211946008 | 重量轻...</td>
<td>所有人，测试账户3，测试账户2</td>
<td>1</td>
<td>2023-02-02 00:00:00</td>
<td>2023-02-02 23:59:59</td>
<td>1</td>
<td>0</td>
<td>0</td>
<td></td>
<td></td>
</tr>
</table>
<div class="abs" style="left:2px;top:716px;width:1601px;height:5px;background:#dddee0;border-radius:3px"></div>
</div>
<div class="abs" style="left:0;top:1118px;width:2078px;height:1px;background:#e4e4e4"></div>
<div class="abs" style="left:2070px;top:52px;width:6px;height:1004px;background:#eff0f2;border-radius:3px"></div>
<div class="abs" style="left:1918px;top:1125px;width:72px;height:32px;background:#f56c6c;border-radius:4px;color:#fff;font-size:13px;line-height:32px;text-align:center;white-space:nowrap"><svg style="vertical-align:middle;margin-right:1px;position:relative;top:-1px" width="10" height="8" viewBox="0 0 10 8"><path d="M0.7 4 L3.7 7 L9.3 1" fill="none" stroke="#fff" stroke-width="1.1"/></svg>保 存</div>
<div class="abs" style="left:2002px;top:1125px;width:68px;height:32px;background:#ecf5ff;border:1px solid #a0cfff;border-radius:4px;color:#409eff;font-size:13px;line-height:30px;text-align:center;white-space:nowrap"><svg style="vertical-align:middle;margin-right:2px;position:relative;top:-1px" width="8" height="8" viewBox="0 0 8 8"><path d="M0.5 0.5 L7.5 7.5 M7.5 0.5 L0.5 7.5" fill="none" stroke="#409eff" stroke-width="1.1"/></svg>关闭</div>
</div>
</body></html>
